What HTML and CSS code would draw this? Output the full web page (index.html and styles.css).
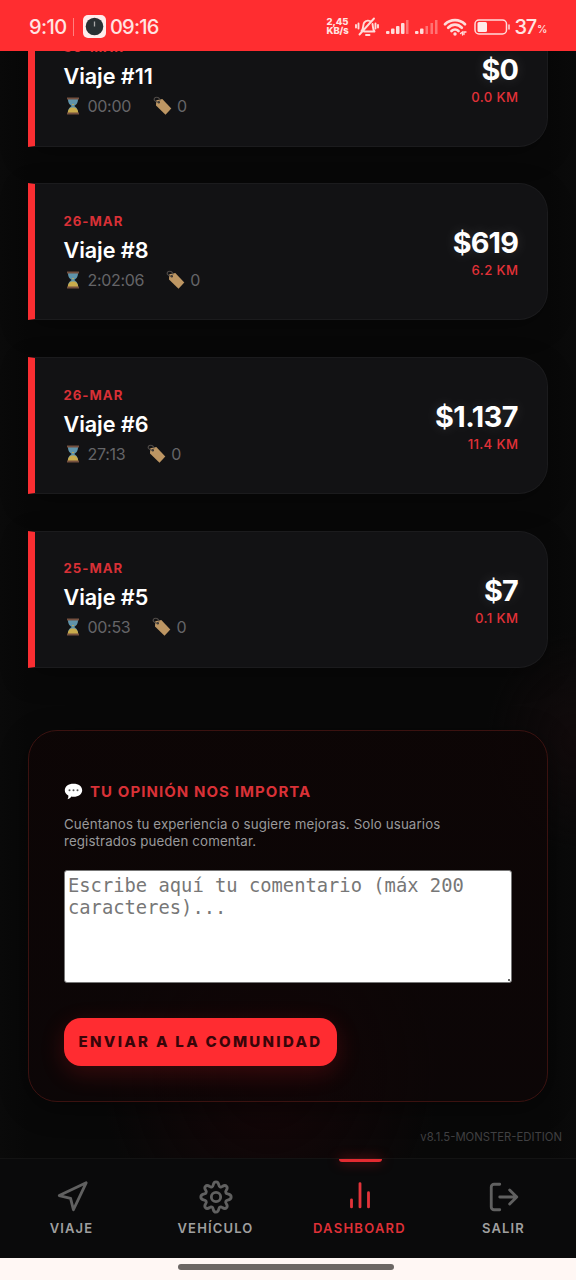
FILE: index.html
```html
<!DOCTYPE html>
<html lang="es">
<head>
<meta charset="utf-8">
<title>Dashboard</title>
<link rel="stylesheet" href="styles.css">
</head>
<body>
<svg class="defs" width="0" height="0">
  <symbol id="hourglass" viewBox="0 0 20 20">
    <path fill="#5f93aa" d="M5 3h10c0 4-1.500 5.500-3.800 7 2.300 1.500 3.800 3 3.800 7H5c0-4 1.500-5.500 3.800-7C6.500 8.500 5 7 5 3z"/>
    <path fill="#c9ab4c" d="M8.800 8h2.400L10 9.500zM4.800 17c0-3.500 2-5.500 5.200-5.500s5.200 2 5.200 5.500z"/>
    <path fill="#75503f" d="M4 1.500h12v2H4zM4 16.500h12v2H4z"/>
  </symbol>
  <symbol id="tag" viewBox="0 0 20 20">
    <path fill="#bd9663" d="M3.300 4.300 9.300 3 18.300 12.500 12.500 18.700 3 9.500z"/>
    <circle cx="5.800" cy="6.300" r="1.200" fill="#393532"/>
    <path fill="none" stroke="#504b48" stroke-width="1.100" d="M5.600 6.300C1 6 .2 2.800 2.400 1.600 4.500.5 7 2 7 4.600"/>
  </symbol>
</svg>
<header class="status">
  <span class="clock">9:10</span><i class="status-sep"></i>
  <svg class="app-chip" viewBox="0 0 23 23"><rect width="23" height="23" rx="5" fill="#ffeceb"/><circle cx="11.500" cy="11.500" r="8.800" fill="#293033"/><path d="M11.500 11.500V6.500" stroke="#a8a8a8" stroke-width="1.300"/></svg>
  <span class="clock clock-alt">09:16</span>
  <div class="status-right">
    <span class="rate"><b>2,45</b><b>KB/s</b></span>
    <svg class="bell" viewBox="0 0 24 20" fill="none" stroke="#ffdcda" stroke-width="1.900" stroke-linecap="round" stroke-linejoin="round"><path d="M6.500 14c2.200-2 1.200-6 2.700-8.400C10.800 3.200 14.500 3 16 5M17.500 7c.7 3 .2 5.500 2 7.500H9M11 18h3.500M4.500 17.500 19 1.500M3.500 6.500v5M1 8v2.500M20.500 6.500v5M23 8v2.500"/></svg>
    <svg class="signal s1" viewBox="0 0 24 16" fill="#ffdcda"><rect x="1" y="12" width="3.500" height="3" rx="1"/><rect x="6" y="9.500" width="3.500" height="5.500" rx="1"/><rect x="11" y="7" width="3.500" height="8" rx="1"/><rect x="16" y="4" width="3.500" height="11" rx="1"/><rect x="21" y="1" width="2.500" height="14" opacity=".4"/></svg>
    <svg class="signal s2" viewBox="0 0 24 16" fill="#ffdcda"><rect x="1" y="12" width="3.500" height="3" rx="1"/><rect x="6" y="9.500" width="3.500" height="5.500" rx="1"/><g opacity=".4"><rect x="11.500" y="7" width="2.500" height="8"/><rect x="16.500" y="4" width="2.500" height="11"/><rect x="21" y="1" width="2.500" height="14"/></g></svg>
    <svg class="wifi" viewBox="0 0 24 18" fill="none" stroke="#ffdcda" stroke-width="2.700" stroke-linecap="round"><path d="M2 6.200C7.500.7 16.500.7 22 6.200M5.200 9.700c4-4 9.600-4 13.600 0M8.500 13c2-2 5-2 7 0"/><circle cx="12" cy="16" r="1.700" fill="#ffdcda" stroke="none"/><path stroke-width="1.300" d="m17.500 15.500 2-1.500v3M21 16.500v-2.500h2"/></svg>
    <svg class="battery" viewBox="0 0 36 16"><rect x="1" y="1" width="31.500" height="14" rx="4" fill="none" stroke="#ffdcda" stroke-width="1.500"/><rect x="3.500" y="3" width="9.500" height="10" rx="1.500" fill="#ffeceb"/><path d="M35 6v4" stroke="#ffdcda" stroke-width="1.500" stroke-linecap="round"/></svg>
    <span class="charge">37</span><span class="percent">%</span>
  </div>
</header>
<main class="content">
  <div class="trips">
  <article class="trip">
    <div class="info"><p class="date">30-MAR</p><h2>Viaje #11</h2><p class="meta"><svg><use href="#hourglass"/></svg><span>00:00</span><svg class="tag"><use href="#tag"/></svg><span>0</span></p></div>
    <div class="amount"><p class="price">$0</p><p class="km">0.0 KM</p></div>
  </article>
  <article class="trip">
    <div class="info"><p class="date">26-MAR</p><h2>Viaje #8</h2><p class="meta"><svg><use href="#hourglass"/></svg><span>2:02:06</span><svg class="tag"><use href="#tag"/></svg><span>0</span></p></div>
    <div class="amount"><p class="price">$619</p><p class="km">6.2 KM</p></div>
  </article>
  <article class="trip">
    <div class="info"><p class="date">26-MAR</p><h2>Viaje #6</h2><p class="meta"><svg><use href="#hourglass"/></svg><span>27:13</span><svg class="tag"><use href="#tag"/></svg><span>0</span></p></div>
    <div class="amount"><p class="price wide">$1.137</p><p class="km">11.4 KM</p></div>
  </article>
  <article class="trip">
    <div class="info"><p class="date">25-MAR</p><h2>Viaje #5</h2><p class="meta"><svg><use href="#hourglass"/></svg><span>00:53</span><svg class="tag"><use href="#tag"/></svg><span>0</span></p></div>
    <div class="amount"><p class="price">$7</p><p class="km">0.1 KM</p></div>
  </article>
  </div>
  <section class="opinion">
    <h3><svg viewBox="0 0 19 17"><path fill="#fff" d="M9.500.8c5.200 0 8.700 2.700 8.700 6.500s-3.500 6.500-8.700 6.500c-.8 0-1.500-.1-2.200-.2-.8 1.400-2 2.400-3.800 2.600.8-1 1-2.200.8-3.600C2.200 11.400.8 9.600.8 7.300.8 3.500 4.300.8 9.500.8z"/><g fill="#555"><circle cx="5.500" cy="7.200" r="1"/><circle cx="9.500" cy="7.200" r="1"/><circle cx="13.500" cy="7.200" r="1"/></g></svg><span>TU OPINIÓN NOS IMPORTA</span></h3>
    <p class="hint">Cuéntanos tu experiencia o sugiere mejoras. Solo usuarios<br>registrados pueden comentar.</p>
    <div class="field"><textarea placeholder="Escribe aquí tu comentario (máx 200 caracteres)..."></textarea><i class="grip"></i></div>
    <button class="send">ENVIAR A LA COMUNIDAD</button>
  </section>
  <p class="version">v8.1.5-MONSTER-EDITION</p>
</main>
<nav class="tabs">
  <a class="tab"><svg viewBox="0 0 24 24"><path d="m3 11 19-9-9 19-2-8z"/></svg><span>VIAJE</span></a>
  <a class="tab"><svg class="gear" viewBox="0 0 24 24"><circle cx="12" cy="12" r="3.300"/><path d="M12 1.300c1.600 0 1.800 1.100 2 2.300.2 1.300 1.400 1.800 2.400 1 1-.7 2-1.300 3-.2 1 1 .500 2-.2 3-.8 1-.2 2.200 1 2.400 1.200.2 2.500.5 2.500 2.200s-1.300 2-2.500 2.200c-1.200.2-1.800 1.400-1 2.400.7 1 1.200 2 .2 3-1 1.100-2 .5-3-.2-1-.8-2.200-.3-2.400 1-.2 1.200-.4 2.300-2 2.300s-1.800-1.100-2-2.300c-.2-1.300-1.400-1.800-2.400-1-1 .7-2 1.300-3 .2-1-1-.5-2 .2-3 .8-1 .2-2.200-1-2.400-1.200-.2-2.500-.5-2.500-2.200s1.300-2 2.500-2.200c1.200-.2 1.800-1.400 1-2.400-.7-1-1.200-2-.2-3 1-1.100 2-.5 3 .2 1 .8 2.200.3 2.400-1 .2-1.200.4-2.300 2-2.300z"/></svg><span>VEHÍCULO</span></a>
  <a class="tab active"><svg viewBox="0 0 24 24"><path d="M6 19v-5M12 19V2.500M18 19V9"/></svg><span>DASHBOARD</span></a>
  <a class="tab"><svg viewBox="0 0 24 24"><path d="M9 21H5a2 2 0 0 1-2-2V5a2 2 0 0 1 2-2h4M16 17l5-5-5-5M21 12H9"/></svg><span>SALIR</span></a>
</nav>
<footer class="system"><i></i></footer>
</body>
</html>
```
FILE: styles.css
```css
* { box-sizing: border-box; }
body { margin: 0; width: 576px; height: 1280px; display: flex; flex-direction: column; overflow: hidden; background: #090909; color: #fff; font-family: Inter, sans-serif; }
p, h2, h3 { margin: 0; }
.defs { display: none; }
.status { height: 50.5px; flex: none; padding: 3px 29px 0; display: flex; align-items: center; background: #ff2d30; color: #ffe4e2; z-index: 2; }
.clock { font-size: 20px; font-weight: 500; letter-spacing: -.6px; width: 44px; white-space: nowrap; }
.status-sep { width: 1px; height: 18px; margin: 0 9px 0 0; background: #ff8180; }
.app-chip { width: 23px; height: 23px; margin-right: 4px; flex: none; }
.clock-alt { width: 52px; letter-spacing: -.8px; }
.status-right { margin-left: auto; display: flex; align-items: center; }
.rate { display: flex; flex-direction: column; gap: 1px; font-size: 9.5px; line-height: 8px; width: 24px; margin-right: 5px; }
.rate b { font-weight: 800; letter-spacing: -.1px; line-height: 8px; }
.bell { width: 24px; height: 20px; margin-right: 6px; }
.signal { width: 24px; height: 16px; margin-right: 5px; }
.wifi { width: 24px; height: 18px; margin-right: 7px; }
.battery { width: 36px; height: 16px; margin-right: 4px; }
.charge { font-size: 20px; font-weight: 500; letter-spacing: -1.2px; margin-right: 1px; }
.percent { font-size: 10.5px; font-weight: 500; padding-top: 5px; letter-spacing: -.5px; }
.content { flex: none; height: 1107.5px; overflow: hidden; padding: 0 28px; display: flex; flex-direction: column; background: radial-gradient(ellipse 90px 110px at 576px 690px, #110a0b, transparent), radial-gradient(ellipse 170px 190px at 270px 1020px, #150507, transparent), linear-gradient(90deg, #0a0a0a, #080808 28px, #080808 548px, #0a0a0a); }
.trips { display: flex; flex-direction: column; gap: 36.7px; margin-top: -40.8px; }
.trip { height: 137px; border: 1px solid #1b1b1d; border-left: 7.500px solid #fa2e32; border-radius: 0 29px 29px 0; background: #121214; padding: 0 29px 0 28.500px; display: flex; justify-content: space-between; align-items: center; box-shadow: 0 8px 28px #00000045; }
.info { margin-top: -1px; }
.date { font-size: 13.2px; line-height: 18px; letter-spacing: 1px; font-weight: 700; color: #d83036; }
h2 { margin-top: 7px; font-size: 21.6px; line-height: 26px; font-weight: 600; letter-spacing: -.05px; }
.meta { height: 22px; margin-top: 6px; display: flex; align-items: center; font-size: 16px; color: #656568; font-weight: 400; letter-spacing: -.3px; }
.meta svg { width: 20px; height: 20px; margin-right: 5px; margin-left: -1px; }
.meta .tag { margin-left: 22px; margin-right: 4px; }
.amount { display: flex; flex-direction: column; align-items: flex-end; padding-top: 3px; }
.price { font-size: 28.8px; line-height: 32px; font-weight: 700; letter-spacing: -.85px; text-shadow: 0 0 14px #ffffff22; }
.price.wide { letter-spacing: -.5px; }
.km { margin-top: 2px; font-size: 13.2px; line-height: 18px; font-weight: 500; letter-spacing: .35px; margin-right: -.3px; color: #e23138; }
.opinion { flex: none; height: 371.5px; margin-top: 62.500px; padding: 48.500px 35px 0; border: 1.300px solid #3b1210; border-radius: 29px; background: linear-gradient(#0d0505e0, #0e0506aa); box-shadow: 0 6px 28px #00000070; display: flex; flex-direction: column; align-items: flex-start; }
h3 { display: flex; align-items: center; height: 23px; color: #d93137; font-size: 15px; line-height: 23px; font-weight: 700; letter-spacing: 1.07px; }
h3 svg { width: 19px; height: 17px; margin-right: 7px; }
.hint { margin-top: 13.300px; color: #99999b; font-size: 13.3px; line-height: 16.8px; letter-spacing: .13px; white-space: nowrap; }
.field { position: relative; margin-top: 20.700px; }
textarea { display: block; width: 448px; height: 113px; padding: 4px 3px; border: 1px solid #777; border-radius: 3px; outline: none; resize: none; background: #fff; font: 18.8px/22px "DejaVu Sans Mono", monospace; color: #777; }
textarea::placeholder { color: #777; }
.grip { position: absolute; right: 2px; bottom: 2px; width: 2px; height: 2px; background: #666; }
.send { width: 273px; height: 48px; margin-top: 34.500px; border: 0; border-radius: 17px; padding: 0; background: #ff2c31; color: #390509; font: 800 15px/48px Inter, sans-serif; letter-spacing: 2.3px; white-space: nowrap; box-shadow: 0 7px 24px #ff202530; }
.version { align-self: flex-end; margin: 27px -14px 0 0; font-size: 11.3px; line-height: 17px; color: #404042; }
.tabs { height: 99.5px; flex: none; border-top: 1.500px solid #131313; background: #0a0a0b; display: flex; z-index: 1; }
.tab { width: 144px; display: flex; flex-direction: column; align-items: center; padding-top: 21px; position: relative; color: #a0a0a0; }
.tab svg { width: 34px; height: 34px; fill: none; stroke: #606060; stroke-width: 2; stroke-linecap: round; stroke-linejoin: round; }
.tab span { margin: 5px 0 0 -1px; font-size: 13px; line-height: 18px; letter-spacing: 1.15px; font-weight: 600; }
.tab.active { color: #df3037; }
.active svg { stroke: #e2343a; }
.tab.active span { letter-spacing: 1.25px; }
.active::before { content: ""; position: absolute; top: 0; left: 51px; width: 43px; height: 3px; border-radius: 0 0 3px 3px; background: #e32b31; box-shadow: 0 0 12px #ff202590; }
.system { flex: 1; background: #fff7f4; display: flex; justify-content: center; padding-top: 6.500px; }
.system i { width: 216px; height: 5.500px; margin-left: -4px; border-radius: 3px; background: #6c6764; }
```
